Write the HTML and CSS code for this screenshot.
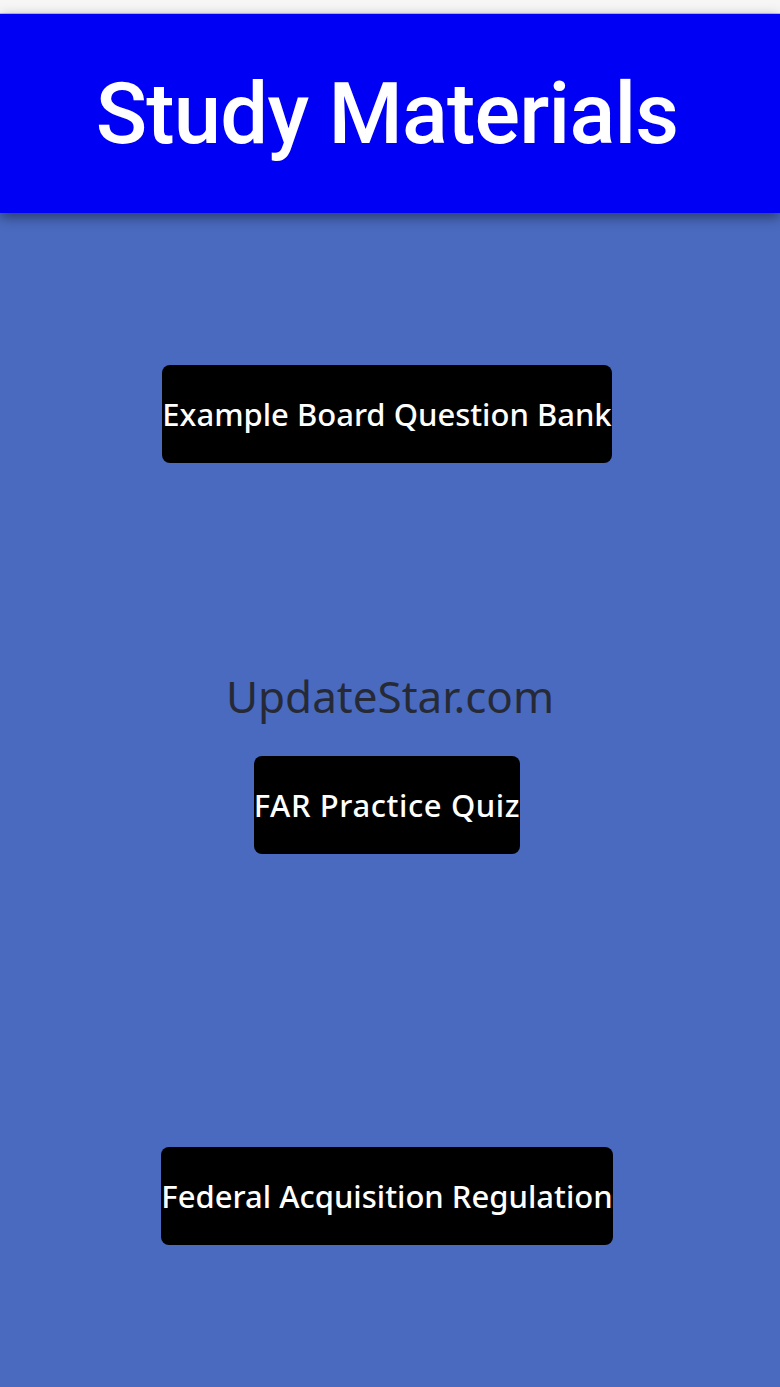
FILE: index.html
```html
<!DOCTYPE html>
<html>
<head>
<meta charset="utf-8">
<link rel="stylesheet" href="styles.css">
</head>
<body>
<div class="statusbar"></div>
<header class="header"><h1 class="title">Study Materials</h1></header>
<main class="content">
  <div class="row"><button class="btn">Example Board Question Bank</button></div>
  <div class="row"><button class="btn btn-wide">FAR Practice Quiz</button></div>
  <div class="row"><button class="btn">Federal Acquisition Regulation</button></div>
  <div class="watermark">UpdateStar.com</div>
</main>
</body>
</html>
```
FILE: styles.css
```css
html, body {
  margin: 0;
  padding: 0;
  height: 1387px;
  overflow: hidden;
  background: #4a6abf;
}
.statusbar {
  height: 13px;
  background: #f6f6f6;
  border-bottom: 1px solid #b8c4e6;
}
.header {
  height: 199px;
  background: #0000f5;
  display: flex;
  align-items: center;
  justify-content: center;
  box-shadow: 0 4px 12px rgba(0, 0, 0, 0.45);
  position: relative;
  z-index: 1;
}
.title {
  margin: 0;
  color: #ffffff;
  font-family: Roboto, "Liberation Sans", sans-serif;
  font-weight: 500;
  font-size: 85px;
  letter-spacing: -0.8px;
  line-height: 1;
  padding-top: 2px;
  padding-right: 6px;
}
.content {
  position: relative;
  padding-top: 5px;
}
.row {
  height: 391px;
  display: flex;
  align-items: center;
  justify-content: center;
  padding-right: 6px;
}
.btn {
  height: 98px;
  padding: 0;
  border: none;
  border-radius: 8px;
  background: #000000;
  color: #ffffff;
  font-family: "Noto Sans", "Open Sans", sans-serif;
  font-weight: 500;
  font-size: 31px;
  white-space: nowrap;
}
.btn-wide {
  letter-spacing: 0.6px;
}
.watermark {
  position: absolute;
  left: 0;
  right: 0;
  top: 461px;
  text-align: center;
  font-family: "Noto Sans", "Open Sans", sans-serif;
  font-size: 44px;
  color: #262a36;
  line-height: 1;
}
```
